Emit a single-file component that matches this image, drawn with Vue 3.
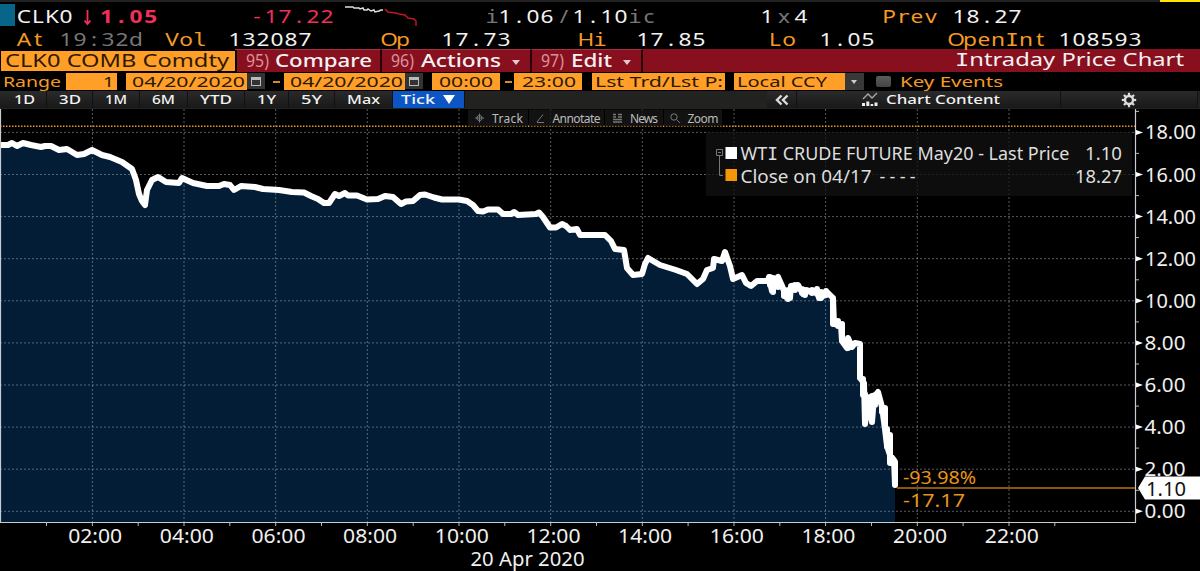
<template>
  <div class="terminal">
    <div class="top-strip"><span class="strip-mark"></span></div>

    <!-- Quote lines -->
    <div class="quote quote-one">
      <span class="flag"></span>
      <Mono t="CLK0" />
      <svg class="arrow" width="12" height="24" viewBox="0 0 12 24">
        <path d="M5.5 6V20M2.500 16.500L5.5 20L8.500 16.500" />
      </svg>
      <Mono class="red" t="1.05" :p="14.8" :bold="true" />
      <Mono class="red" t="-17.22" />
      <svg width="76" height="24" viewBox="0 0 76 24" class="spark">
        <path stroke="#ddd" d="M0 3H8L9 4H14L15 5L18 4L19 6H22L23 5L26 7L29 6L30 8L34 7L36 6L38 6" />
        <path stroke="#c01525" d="M40 5L43 8L51 9L54 10L60 11L63 14L69 15L71 17V22" />
      </svg>
      <Mono class="dim" t="i" :p="12" />
      <Mono t="1.06" />
      <Mono class="dim" t="/" :p="12" />
      <Mono t="1.10" />
      <Mono class="dim" t="ic" />
      <Mono t="1" />
      <Mono class="dim" t="x" />
      <Mono t="4" />
      <Mono class="amber" t="Prev" />
      <Mono t="18.27" />
    </div>
    <div class="quote quote-two">
      <template v-for="q in quoteTwo" :key="q[0]">
        <Mono :class="q[1]" :t="q[0]" :h="21" :b="17.6" />
      </template>
    </div>

    <!-- Function bar -->
    <div class="function-bar">
      <div class="security"><Fit t="CLK0 COMB Comdty" :w="224" :h="20" :b="15.8" :s="17.5" /></div>
      <div v-for="f in functions" :key="f.num" class="fn" :class="f.cls">
        <Fit class="fn-num" :t="f.num" :w="23" :h="22" :b="17.2" :s="18.5" />
        <Fit :t="f.label" :w="f.w" :h="22" :b="16.7" :s="17.5" :weight="500" />
        <i v-if="f.menu" class="caret"></i>
      </div>
      <div class="title"><Fit t="Intraday Price Chart" :w="229" :h="23" :b="17.4" :s="18" /></div>
    </div>

    <!-- Range inputs -->
    <div class="range-bar">
      <Fit class="amber" t="Range" :w="58" />
      <div class="field num"><Fit t="1" :w="11" /></div>
      <div class="field date"><Fit t="04/20/2020" :w="113" /></div>
      <span class="cal"><i></i></span>
      <span class="dash"></span>
      <div class="field date"><Fit t="04/20/2020" :w="113" /></div>
      <span class="cal"><i></i></span>
      <div class="field time first"><Fit t="00:00" :w="54" /></div>
      <span class="dash small"></span>
      <div class="field time"><Fit t="23:00" :w="54" /></div>
      <div class="field source"><Fit t="Lst Trd/Lst P:" :w="128" /></div>
      <div class="field ccy"><Fit t="Local CCY" :w="90" /></div>
      <span class="drop"><i class="caret"></i></span>
      <span class="check"></span>
      <Fit class="amber" t="Key Events" :w="103" />
    </div>

    <!-- Period tabs -->
    <div class="tab-bar">
      <div v-for="p in periods" :key="p.t" class="tab" :style="{ width: p.box + 'px' }">
        <Fit :t="p.t" :w="p.w" :h="17" :b="13" :s="13" :weight="500" />
      </div>
      <div class="tab active">
        <Fit t="Tick" :w="34" :h="17" :b="13" :s="13" :weight="500" />
        <i class="caret big"></i>
      </div>
      <div class="filler"></div>
      <div class="tab collapse">
        <svg width="16" height="14" viewBox="0 0 16 14">
          <path d="M7.5 2.500L3 7L7.5 11.500M13.500 2.500L9 7L13.500 11.500" fill="none" stroke="#ddd" stroke-width="2.400" />
        </svg>
      </div>
      <div class="tab content">
        <svg width="16" height="15" viewBox="0 0 16 15">
          <path d="M1 7L6 2L10 6L15 1" fill="none" stroke="#aaa" stroke-width="1.3" />
          <path d="M0 14V11H3V14ZM4.3 14V9.5H7.3V14ZM8.6 14V12H11.2V14ZM12.5 14V10.5H15.5V14Z" fill="#eee" />
        </svg>
        <Fit t="Chart Content" :w="114" :h="17" :b="13" :s="13" :weight="500" />
      </div>
      <div class="tab settings">
        <svg width="16" height="16" viewBox="-8 -8 16 16">
          <circle r="4" fill="none" stroke="#ddd" stroke-width="2.4" />
          <path v-for="a in 8" :key="a" d="M0 -4.5V-7.2" stroke="#ddd" stroke-width="2.2" :transform="`rotate(${a * 45})`" />
        </svg>
      </div>
    </div>

    <!-- Chart -->
    <svg class="chart" width="1200" height="462" viewBox="0 109 1200 462">
      <path class="area" :d="areaPath" />
      <g class="grid">
        <line v-for="h in 11" :key="'v' + h" :x1="xAt(h * 2)" :x2="xAt(h * 2)" y1="109" y2="522" />
        <line v-for="v in 10" :key="'h' + v" x1="0" x2="1135" :y1="yAt((v - 1) * 2)" :y2="yAt((v - 1) * 2)" />
      </g>
      <path class="close-line" d="M0 126.3H1135" />

      <!-- chart tools -->
      <g class="tools">
        <rect x="468" y="109.5" width="60" height="17" />
        <rect x="529" y="109.5" width="75" height="17" />
        <rect x="605" y="109.5" width="58" height="17" />
        <rect x="664" y="109.5" width="58" height="17" />
        <g class="tool-icons">
          <path d="M475 118H484M479.500 113.500V122.500" />
          <circle cx="479.500" cy="118" r="2.600" />
          <path d="M537 122L543 114.500M537 122.500H544" />
          <path d="M613 114.500H616M618 114.500H622M613 117H616M618 117H622M613 119.500H622M613 122H622" stroke-width="1.400" />
          <circle cx="674" cy="117" r="3.200" />
          <path d="M676.500 119.500L680 123" />
        </g>
        <text x="492" y="122.500" textLength="31">Track</text>
        <text x="552.500" y="122.500" textLength="48">Annotate</text>
        <text x="630" y="122.500" textLength="28">News</text>
        <text x="687.500" y="122.500" textLength="31">Zoom</text>
      </g>

      <path class="price" :d="linePath" />

      <!-- axes -->
      <path class="axis" d="M0.500 109V522.500M1135.500 109V522.500M0 522.500H1136" />
      <path v-for="h in 23" :key="'t' + h" class="tick" :d="`M${xAt(h)} 523v3`" />
      <path v-for="v in 10" :key="'m' + v" class="tick" :d="`M1136 ${yAt(v * 2 - 1)}h3`" />
      <path v-for="v in 10" :key="'a' + v" fill="#fff" :d="`M1136 ${yAt(v * 2 - 2) - 2.5}L1143 ${yAt(v * 2 - 2)}L1136 ${yAt(v * 2 - 2) + 2.5}Z`" />
      <g class="labels">
        <text v-for="v in 10" :key="'y' + v" :x="v > 5 ? 1145 : 1144.500" :y="yAt(v * 2 - 2) + 7" :textLength="v > 5 ? 51 : 41" lengthAdjust="spacingAndGlyphs">{{ (v * 2 - 2).toFixed(2) }}</text>
        <text v-for="h in 11" :key="'x' + h" :x="xAt(h * 2) - 24.200" y="542.700" textLength="54" lengthAdjust="spacingAndGlyphs">{{ String(h * 2).padStart(2, '0') }}:00</text>
        <text x="470.500" y="566" textLength="114" lengthAdjust="spacingAndGlyphs">20 Apr 2020</text>
      </g>

      <!-- last price -->
      <path d="M897 488H1135" stroke="#b8730f" stroke-width="1.300" />
      <g class="change">
        <text x="903" y="484" textLength="73" lengthAdjust="spacingAndGlyphs">-93.98%</text>
        <text x="903" y="507" textLength="62" lengthAdjust="spacingAndGlyphs">-17.17</text>
      </g>
      <path d="M1138 488L1145 476.500H1200V499.500H1145Z" fill="#fff" />
      <text class="last" x="1146" y="495.500" textLength="40" lengthAdjust="spacingAndGlyphs">1.10</text>

      <!-- legend -->
      <rect x="706" y="132" width="426" height="64" fill="#121212" fill-opacity="0.740" />
      <path d="M719.500 155V175.500H723M716.500 149.500H722.500V155.500H716.500ZM718 152.500H721" fill="none" stroke="#777" />
      <rect x="725.500" y="147" width="11.500" height="12" fill="#fff" />
      <rect x="725.500" y="169" width="11.500" height="12" fill="#f59608" />
      <g class="legend">
        <text x="740.500" y="160" textLength="329" lengthAdjust="spacingAndGlyphs">WT<tspan class="slab">I</tspan> CRUDE FUTURE May20 - Last Price</text>
        <text x="1085" y="160" textLength="37" lengthAdjust="spacingAndGlyphs">1.10</text>
        <text x="740.500" y="182.500" textLength="131" lengthAdjust="spacingAndGlyphs">Close on 04/17</text>
        <text x="879.500" y="182.500" textLength="36">----</text>
        <text x="1075" y="182.500" textLength="47" lengthAdjust="spacingAndGlyphs">18.27</text>
      </g>
    </svg>
  </div>
</template>

<script setup>
import { h } from 'vue'

const SANS = '"Noto Sans", "Open Sans", sans-serif'
const SLAB = '"DejaVu Sans Mono", monospace'

// Text stretched to a given width; capital I gets serifs
const Fit = ({ t, w, h: ht = 18, b = 14.5, s = 15, weight = 400 }) =>
  h('svg', { width: w, height: ht, style: 'flex: none' }, [
    h('text', {
      x: 0, y: b, textLength: w, lengthAdjust: 'spacingAndGlyphs', fill: 'currentColor',
      'font-family': SANS, 'font-size': s, 'font-weight': weight
    }, t.split(/(I)/).filter(Boolean).map(part => h('tspan', part === 'I' ? { 'font-family': SLAB } : {}, part)))
  ])
Fit.props = ['t', 'w', 'h', 'b', 's', 'weight']

// Fixed pitch text, one wide cell per character
const Mono = ({ t, p = 14, h: ht = 24, b = 18.8, bold }) => {
  const k = 1.26
  const chars = [...t]
  return h('svg', { width: chars.length * p, height: ht, style: 'flex: none' }, [
    h('text', {
      x: chars.map((c, i) => ((i + 0.5) * p / k).toFixed(2)).join(' '),
      y: b, transform: `scale(${k},1)`, 'text-anchor': 'middle', fill: 'currentColor',
      'font-size': 18, 'font-weight': bold ? 700 : 400
    }, chars.map(c => h('tspan', { 'font-family': /[Iilr]/.test(c) ? SLAB : SANS }, c)))
  ])
}
Mono.props = ['t', 'p', 'h', 'b', 'bold']

const quoteTwo = [
  ['At', 'amber'], ['19:32d', 'dim'], ['Vol', 'amber'], ['132087', ''],
  ['Op', 'amber'], ['17.73', ''], ['Hi', 'amber'], ['17.85', ''],
  ['Lo', 'amber'], ['1.05', ''], ['OpenInt', 'amber'], ['108593', '']
]

const functions = [
  { num: '95)', label: 'Compare', w: 97, cls: 'compare' },
  { num: '96)', label: 'Actions', w: 80, cls: 'actions', menu: true },
  { num: '97)', label: 'Edit', w: 41, cls: 'edit', menu: true }
]

const periods = [
  { t: '1D', w: 21, box: 47 },
  { t: '3D', w: 22, box: 46 },
  { t: '1M', w: 22, box: 47 },
  { t: '6M', w: 23, box: 48 },
  { t: 'YTD', w: 32, box: 57 },
  { t: '1Y', w: 19, box: 44 },
  { t: '5Y', w: 21, box: 46 },
  { t: 'Max', w: 33, box: 58 }
]

const xAt = hour => +(0.7 + hour * 45.83).toFixed(1)
const yAt = value => +(511.3 - value * 21.05).toFixed(1)

const points = [
  [0, 145], [8, 145], [12, 143], [17, 146], [23, 143], [31, 145], [41, 147], [45, 146],
  [51, 146], [59, 150], [67, 149], [77, 155], [84, 154], [92, 150], [102, 155], [110, 157],
  [122, 162], [132, 169], [136, 180], [139, 194], [142, 201], [145, 205], [147, 190], [152, 180],
  [158, 177], [166, 182], [179, 183], [182, 178], [193, 183], [207, 186], [219, 186], [224, 184],
  [230, 185], [234, 190], [241, 186], [255, 187], [263, 189], [279, 190], [292, 192], [304, 192.5],
  [311, 196], [318, 199], [324, 203], [329, 203], [335, 194], [339, 196], [345, 193], [348, 195.5],
  [357, 195.5], [367, 199.5], [378, 199], [385, 196], [393, 197], [401, 204], [406, 201.5], [413, 201],
  [420, 195], [425, 194.5], [434, 197.5], [442, 199.5], [459, 199.5], [467, 201], [473, 205],
  [478, 211], [483, 211.500], [488, 209.500], [498, 209.500], [503, 214], [511, 214], [514, 212],
  [518, 215], [536, 214], [539, 212.5], [543, 217], [550, 227.5], [556, 227.5], [562, 224], [566, 226],
  [570, 230], [577, 229], [580, 235], [588, 235], [605, 235], [611, 241], [615, 249], [624, 250],
  [627, 268], [633, 275], [642, 274], [645, 264], [648, 258], [660, 265], [676, 270], [687, 274],
  [697, 284], [703, 279], [707, 270], [713, 268], [714, 259], [722, 261], [725, 252], [730, 266],
  [733, 279], [742, 275], [746, 283], [751, 286], [757, 281], [768, 281], [769, 277], [772, 291],
  [773, 281], [778, 277], [782, 286], [787, 298], [790, 298], [791, 286], [798, 285], [803, 294],
  [807, 290], [812, 293], [817, 290], [819, 298], [822, 297], [827, 292], [833, 298], [834, 324],
  [841, 325], [842, 341], [847, 348], [848, 338], [852, 347], [855, 343], [860, 344], [860, 378],
  [864, 383], [865, 424], [868, 399], [872, 422], [874, 397], [878, 392], [882, 407], [885, 429],
  [887, 446], [890, 455], [894, 460], [895, 485]
]

// Short spikes between the trend points, busier from 16:50 on
const jitter = 'M770 277V285M773 278V292M778 277V287M784 290V296M788 290V299M795 285V290M802 293V289M805 290V295M812 293V290M817 289V294M821 292V298M826 291V295M833 298V324M838 321V326M842 324V341M848 339V348M860 344V378M863 379V395M865 394V424M868 398V417M870 397V410M872 396V422M875 395V405M882 407V412M885 408V428M887 429V447M890 435V463M895 462V485'

const trend = 'M' + points.map(p => p.join(' ')).join('L')
const linePath = trend + jitter
const areaPath = trend + 'V522H0Z'
</script>

<style scoped>
.terminal {
  width: 1200px;
  height: 571px;
  overflow: hidden;
  background: #000;
  color: #f2f2f2;
  font-family: "Noto Sans", sans-serif;
}

.terminal svg {
  display: block;
  overflow: visible;
}

.terminal .amber { color: #f59a25; }
.terminal .red { color: #ef3058; }
.terminal .dim { color: #777; }

.top-strip {
  height: 4px;
  background: linear-gradient(#222 0 2px, #000 2px);
  display: flex;
  justify-content: flex-end;
}

.strip-mark {
  width: 40px;
  height: 2px;
  background: #ffe600;
}

.quote {
  display: grid;
  justify-items: start;
}

.quote-one {
  height: 24px;
  grid-template-columns: 17px 65px 17px 151px 95px 141px 12px 60px 14px 56px 132px 17px 17px 88px 70px 80px;
}

.quote-two {
  height: 21px;
  padding-left: 17px;
  grid-template-columns: 42px 106px 63px 154px 59px 138px 57px 132px 51px 130px 109px 90px;
}

.flag {
  width: 15px;
  height: 22px;
  background: #07658a;
}

.arrow {
  fill: none;
  stroke: #ef3058;
  stroke-width: 1.8;
}

.spark {
  fill: none;
  stroke-width: 1.5;
}

.function-bar {
  height: 23px;
  display: flex;
  background: #870f1e;
}

.security {
  width: 230px;
  height: 20px;
  padding-left: 4px;
  margin-top: 2px;
  margin-bottom: 1px;
  outline: 2px solid #000;
  border-left: 1px solid #000;
  background: #ff9f28;
  color: #2c1905;
}

.fn {
  display: flex;
  align-items: center;
  border-right: 2px solid #250308;
  border-top: 1px solid #a33441;
  box-sizing: border-box;
}

.fn-num {
  color: #d9929b;
}

.compare { width: 147px; padding-left: 11px; gap: 6px; }
.actions { width: 150px; padding-left: 9px; gap: 7px; }
.edit { width: 111px; padding-left: 9px; gap: 7px; }

.caret {
  border: 4px solid transparent;
  border-top: 5px solid #e6c9cc;
  border-bottom: 0;
  margin: 2px 0 0 4px;
}

.title {
  margin-left: auto;
  padding-right: 16px;
}

.range-bar {
  height: 19px;
  display: flex;
  align-items: flex-start;
  padding-left: 3px;
}

.field {
  box-sizing: border-box;
  height: 17px;
  margin-top: 1px;
  background: #ff9f28;
  color: #2c1905;
  display: flex;
}

.field svg {
  margin-top: -1px;
}

.num { width: 51px; margin-left: 5px; padding-left: 37px; }
.date { width: 121px; margin-left: 9px; padding-left: 6px; }
.time { width: 68px; padding-left: 8px; }
.time.first { margin-left: 9px; padding-left: 7px; }
.source { width: 133px; margin-left: 10px; padding-left: 3px; }
.ccy { width: 111px; margin-left: 9px; padding-left: 3px; }

.cal {
  width: 18px;
  height: 16px;
  margin-top: 1px;
  background: #333;
  display: flex;
  align-items: center;
  justify-content: center;
}

.cal i {
  width: 8px;
  height: 5px;
  border: 1.5px solid #bbb;
  border-top-width: 3px;
}

.dash {
  width: 7px;
  height: 1.5px;
  margin: 9px 3px 0 8px;
  background: #d98a22;
}

.dash + .date {
  margin-left: 1px;
}

.dash.small {
  margin: 9px 2px 0 5px;
}

.drop {
  width: 19px;
  height: 17px;
  margin-top: 1px;
  background: #383838;
}

.drop .caret {
  display: block;
  width: 0;
  margin: 7px 0 0 6px;
  border-width: 3.5px;
  border-top: 4px solid #ccc;
  border-bottom: 0;
}

.check {
  width: 15px;
  height: 11px;
  margin: 4px 9px 0 12px;
  background: linear-gradient(#5c5c5c, #444);
  border-radius: 2px;
}

.tab-bar {
  height: 18px;
  display: flex;
  background: #222220;
}

.tab {
  box-sizing: border-box;
  height: 17px;
  display: flex;
  align-items: center;
  justify-content: center;
  background: linear-gradient(#2a2a2a, #191919);
  border-right: 1px solid #111;
}

.tab:first-child {
  padding-left: 2px;
}

.active {
  width: 72px;
  padding-right: 2px;
  background: #0c55c4;
}

.big {
  border-width: 6.5px;
  border-top: 9px solid #fff;
  border-bottom: 0;
  margin: 0 0 0 8px;
}

.filler { width: 302px; }
.collapse { width: 30px; }
.content { width: 264px; gap: 8px; padding-left: 4px; }
.settings { width: 137px; }

.chart {
  font-family: "Noto Sans", sans-serif;
}

.area { fill: #031d37; }

.grid line {
  stroke: #8c9aa8;
  stroke-opacity: 0.6;
  stroke-width: 1;
  stroke-dasharray: 2 2;
}

.close-line {
  stroke: #e8961e;
  stroke-width: 1.6;
  stroke-dasharray: 1.5 1.5;
}

.tools rect { fill: #171717; fill-opacity: 0.8; }
.tools text { fill: #bbb; font-size: 12px; }

.tool-icons {
  fill: none;
  stroke: #777;
  stroke-width: 1;
}

.price {
  fill: none;
  stroke: #fff;
  stroke-width: 6;
  stroke-linejoin: round;
  stroke-linecap: round;
}

.axis { fill: none; stroke: #c5ccd2; stroke-width: 1.2; }
.tick { stroke: #bbb; stroke-width: 1; }
.labels { fill: #f0f0f0; font-size: 20.3px; }
.change { fill: #e8941a; font-size: 17.8px; }
.last { fill: #111; font-size: 20px; }
.legend { fill: #dedede; font-size: 18px; }
.slab { font-family: "DejaVu Sans Mono", monospace; }
</style>

<style>
body {
  margin: 0;
  background: #000;
}
</style>
